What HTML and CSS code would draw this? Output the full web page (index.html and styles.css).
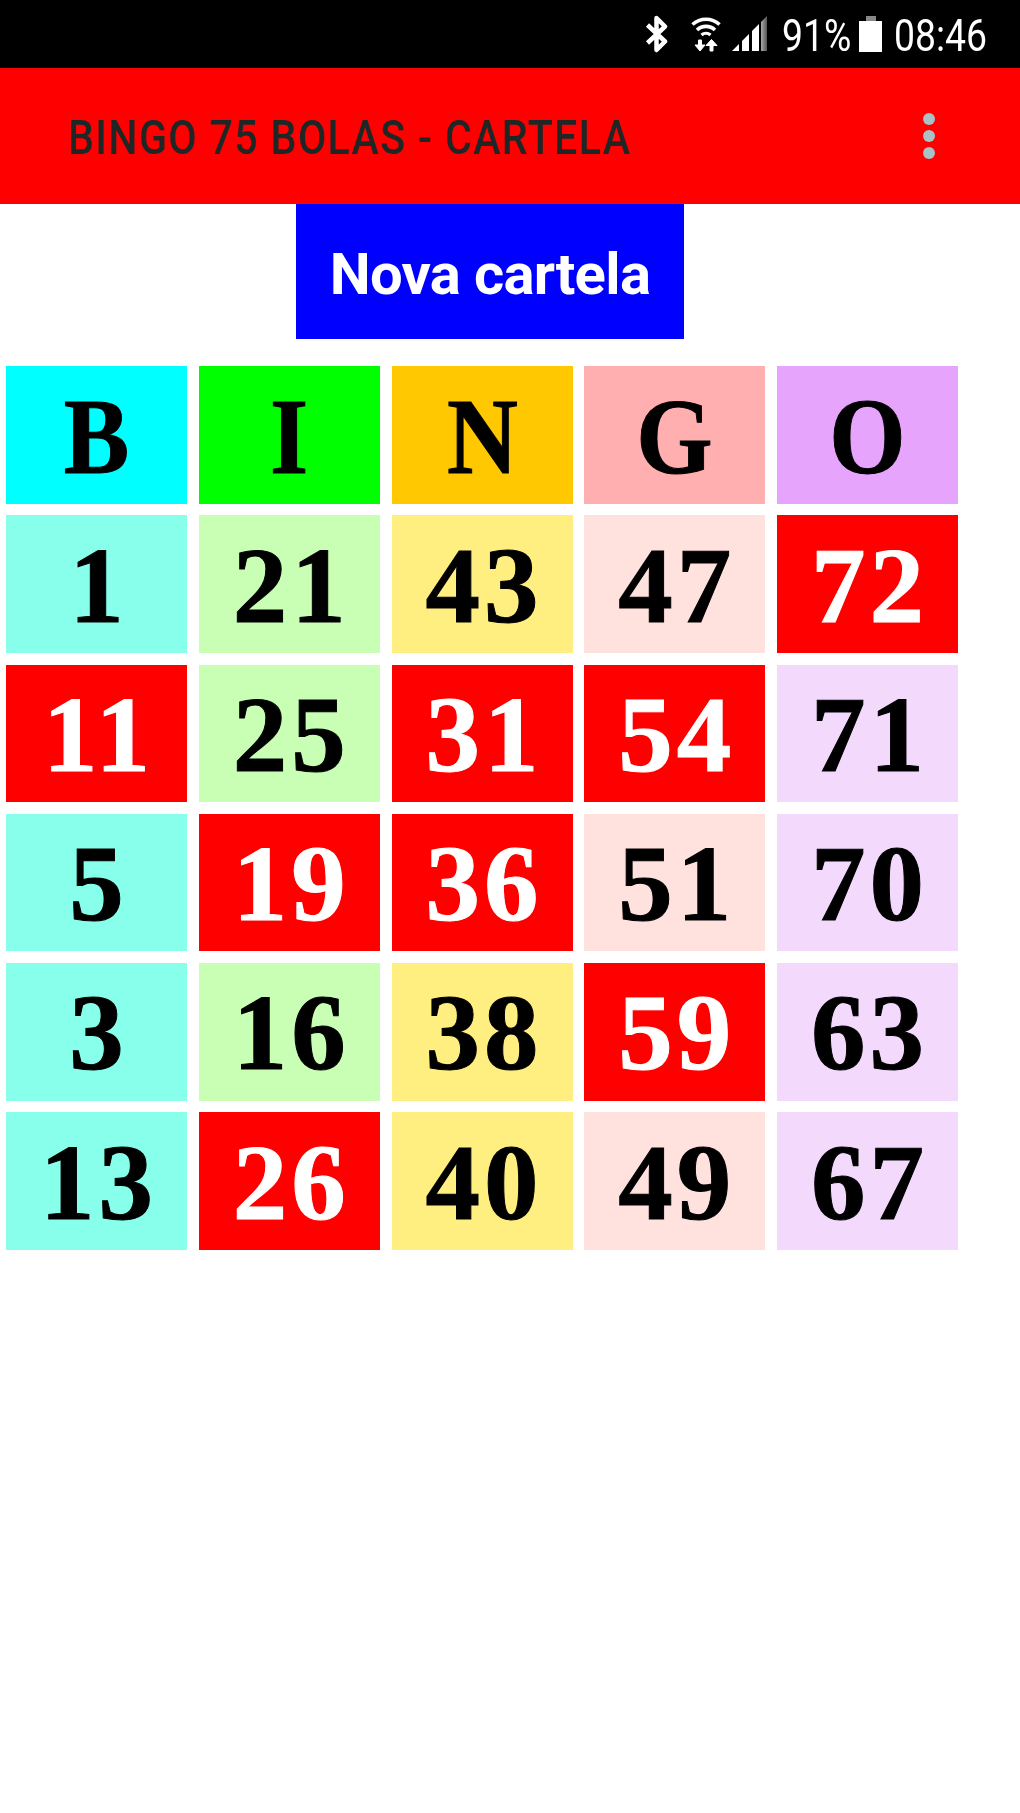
FILE: index.html
```html
<!DOCTYPE html>
<html lang="pt">
<head>
<meta charset="utf-8">
<title>Bingo 75 Bolas - Cartela</title>
<link rel="stylesheet" href="styles.css">
</head>
<body>
<div class="status">
  <svg class="ic-bt" viewBox="0 0 23 38"><path d="M2.500 10 L20 26.500 L11.500 35 L11.500 3 L20 11.500 L2.500 28" fill="none" stroke="#fff" stroke-width="4.500" stroke-linejoin="round"/></svg>
  <svg class="ic-wifi" viewBox="0 0 30 36">
    <path d="M1.500 8.500 A20 20 0 0 1 28.500 8.500" fill="none" stroke="#fff" stroke-width="3.600"/>
    <path d="M6 14 A13 13 0 0 1 24 14" fill="none" stroke="#fff" stroke-width="3.600"/>
    <path d="M10.500 19 A7 7 0 0 1 19.500 19" fill="none" stroke="#fff" stroke-width="3.400"/>
    <path d="M7.500 24 H10.500 V29 H14 L9 35 L4 29 H7.500 Z" fill="#fff" stroke="#fff" stroke-width="1"/>
    <path d="M19 35 H22 V29.500 H26 L20.500 23.500 L15 29.500 H19 Z" fill="#fff" stroke="#fff" stroke-width="1"/>
  </svg>
  <svg class="ic-sig" viewBox="0 0 36 36">
    <defs><linearGradient id="sg" x1="0" x2="1" y1="0" y2="0"><stop offset="0" stop-color="#aaa"/><stop offset="1" stop-color="#555"/></linearGradient></defs>
    <path d="M0 35 L7 28 V35 Z" fill="#fff"/>
    <path d="M10 25 L17 18 V35 H10 Z" fill="#fff"/>
    <path d="M20 15 L27 8 V35 H20 Z" fill="#fff"/>
    <path d="M29 6 L35 0 V35 H29 Z" fill="url(#sg)"/>
  </svg>
  <span class="st-text st-pct">91%</span>
  <svg class="ic-bat" viewBox="0 0 23 36"><rect x="7" y="0" width="10" height="6" fill="#888"/><rect x="0" y="5" width="23" height="31" fill="#fff"/></svg>
  <span class="st-text st-time">08:46</span>
</div>
<header class="bar">
  <h1 class="title">BINGO 75 BOLAS - CARTELA</h1>
  <div class="menu"><i></i><i></i><i></i></div>
</header>
<main>
  <button class="new">Nova cartela</button>
  <div class="card">
    <div class="cell h-b"><span class="ltr">B</span></div><div class="cell h-i"><span class="ltr">I</span></div><div class="cell h-n"><span class="ltr">N</span></div><div class="cell h-g"><span class="ltr">G</span></div><div class="cell h-o"><span class="ltr">O</span></div>
    <div class="cell c-b">1</div><div class="cell c-i">21</div><div class="cell c-n">43</div><div class="cell c-g">47</div><div class="cell hit">72</div>
    <div class="cell hit">11</div><div class="cell c-i">25</div><div class="cell hit">31</div><div class="cell hit">54</div><div class="cell c-o">71</div>
    <div class="cell c-b">5</div><div class="cell hit">19</div><div class="cell hit">36</div><div class="cell c-g">51</div><div class="cell c-o">70</div>
    <div class="cell c-b">3</div><div class="cell c-i">16</div><div class="cell c-n">38</div><div class="cell hit">59</div><div class="cell c-o">63</div>
    <div class="cell c-b">13</div><div class="cell hit">26</div><div class="cell c-n">40</div><div class="cell c-g">49</div><div class="cell c-o">67</div>
  </div>
</main>
</body>
</html>
```
FILE: styles.css
```css
* { box-sizing: border-box; }
html, body { margin: 0; padding: 0; background: #fff; }
body { width: 1020px; height: 1813px; overflow: hidden; font-family: Roboto, sans-serif; filter: blur(0.6px); }

.status { height: 68px; background: #000; display: flex; align-items: flex-start; padding: 16px 0 0 645px; color: #fff; }
.status svg { display: block; flex: none; }
.ic-bt { width: 23px; height: 38px; margin-right: 23px; margin-top: -1px; }
.ic-wifi { width: 30px; height: 36px; margin-right: 11px; }
.ic-sig { width: 36px; height: 36px; margin-right: 14px; }
.ic-bat { width: 23px; height: 36px; margin-right: 12px; }
.st-text { display: block; flex: none; font-size: 45px; line-height: 40px; font-weight: 400; transform-origin: left top; transform: scaleX(0.83); white-space: nowrap; }
.st-pct { width: 68px; margin-right: 9px; }
.st-time { width: 93px; }

.bar { height: 136px; background: #f00; display: flex; align-items: center; padding-left: 68px; position: relative; }
.title { margin: 3px 0 0; font-size: 49px; font-weight: 500; letter-spacing: 1.600px; color: #1f2626; white-space: nowrap; transform-origin: left center; transform: scaleX(0.84); line-height: 1; }
.menu { margin-left: auto; margin-right: 85px; display: flex; flex-direction: column; gap: 5px; }
.menu i { display: block; width: 12px; height: 12px; border-radius: 50%; background: #a9c2c6; }

.new { display: block; width: 388px; height: 135px; margin: 0 0 27px 296px; padding: 4px 0 0; border: 0; border-radius: 0; background: #00f; color: #fff; font-family: Roboto, sans-serif; font-weight: 700; font-size: 58px; letter-spacing: -0.700px; }

.card { display: grid; grid-template-columns: repeat(5, 181px); grid-auto-rows: 137.5px; column-gap: 11.75px; row-gap: 11.8px; padding-left: 6px; }
.cell { display: flex; align-items: center; justify-content: center; padding: 2px 0 0 4px; font-family: "Liberation Serif", serif; font-weight: 700; font-size: 109px; letter-spacing: 4px; -webkit-text-stroke: 1px currentColor; line-height: 1; color: #000; }
.ltr { display: block; letter-spacing: 0; margin: 2px 0 0 -4px; transform: scaleX(0.9); }
.h-b { background: #0ff; }
.h-i { background: #0f0; }
.h-n { background: #ffc800; }
.h-g { background: #ffafaf; }
.h-o { background: #e6a4fc; }
.c-b { background: #88ffea; }
.c-i { background: #c9ffb4; }
.c-n { background: #ffee80; }
.c-g { background: #ffe1de; }
.c-o { background: #f3dafd; }
.hit { background: #f00; color: #fff; }
```
